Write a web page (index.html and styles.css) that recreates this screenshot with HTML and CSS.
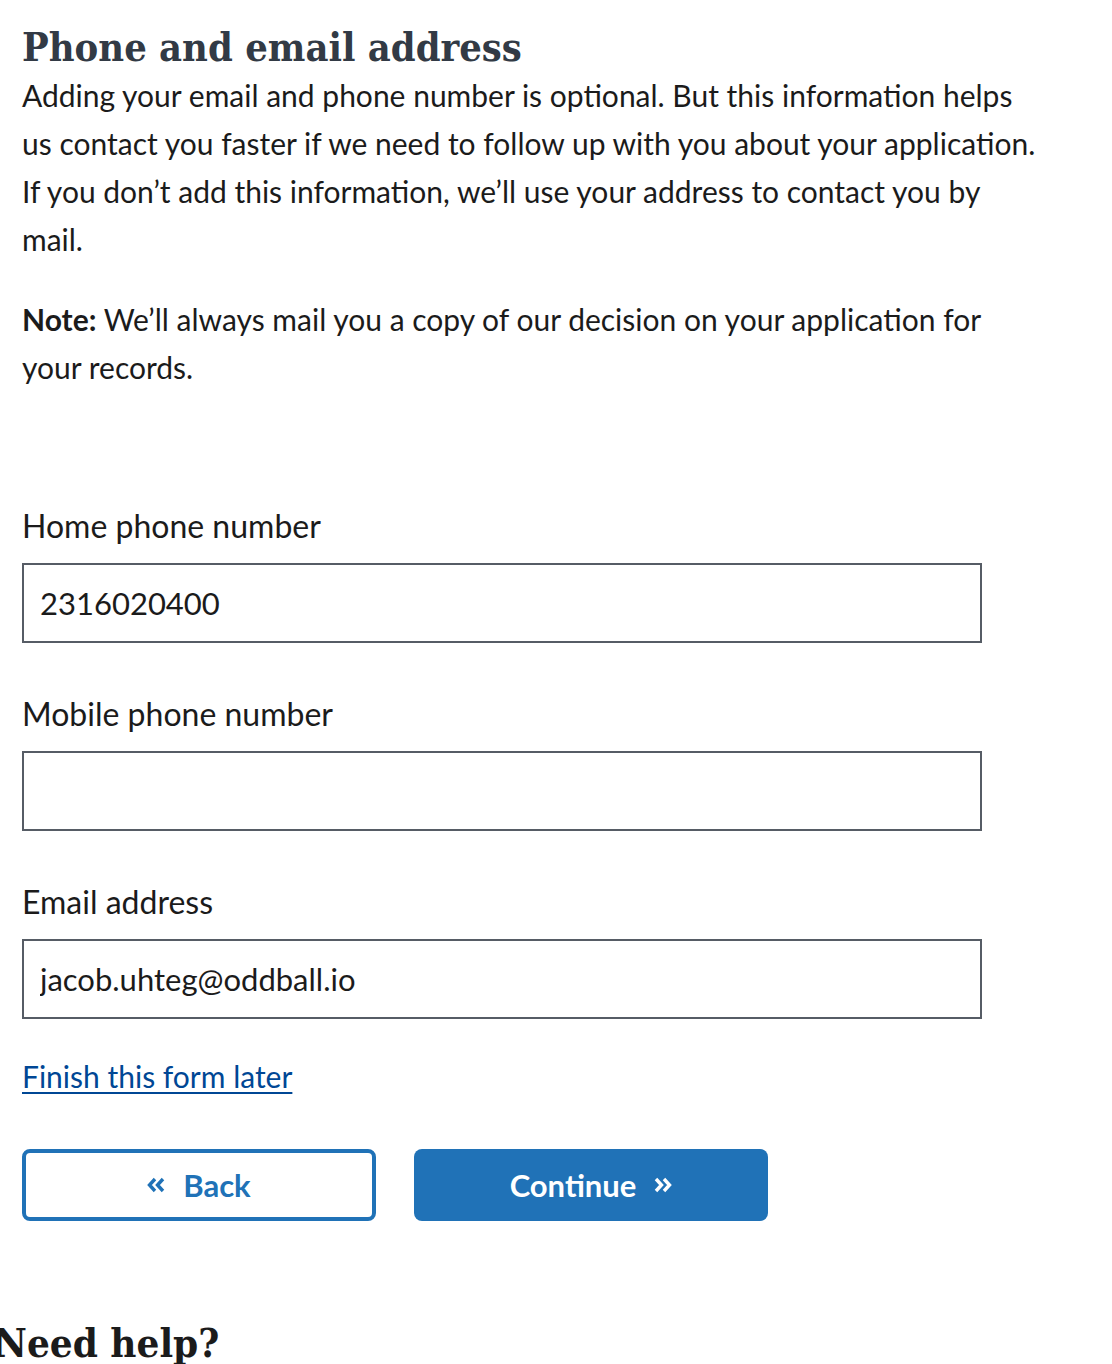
FILE: index.html
```html
<!DOCTYPE html>
<html lang="en">
<head>
<meta charset="utf-8">
<title>Phone and email address</title>
<link rel="stylesheet" href="styles.css">
</head>
<body>
<main class="page">
  <h1 class="title">Phone and email address</h1>
  <p class="intro">Adding your email and phone number is optional. But this information helps us contact you faster if we need to follow up with you about your application. If you don’t add this information, we’ll use your address to contact you by mail.</p>
  <p class="intro"><strong>Note:</strong> We’ll always mail you a copy of our decision on your application for your records.</p>

  <form class="form">
    <div class="field">
      <label class="label" for="home">Home phone number</label>
      <input class="input" id="home" type="text" value="2316020400">
    </div>
    <div class="field">
      <label class="label" for="mobile">Mobile phone number</label>
      <input class="input" id="mobile" type="text" value="">
    </div>
    <div class="field">
      <label class="label" for="email">Email address</label>
      <input class="input" id="email" type="text" value="jacob.uhteg@oddball.io">
    </div>
    <a class="later" href="#">Finish this form later</a>
    <div class="actions">
      <button type="button" class="btn btn-back">
        <svg class="chev" width="18" height="16" viewBox="0 0 18 16" aria-hidden="true"><polyline points="8,2 2.5,8 8,14" fill="none" stroke="currentColor" stroke-width="3.4" stroke-linejoin="miter"/><polyline points="16,2 10.5,8 16,14" fill="none" stroke="currentColor" stroke-width="3.4" stroke-linejoin="miter"/></svg>
        <span>Back</span>
      </button>
      <button type="button" class="btn btn-continue">
        <span>Continue</span>
        <svg class="chev" width="18" height="16" viewBox="0 0 18 16" aria-hidden="true"><polyline points="2,2 7.5,8 2,14" fill="none" stroke="currentColor" stroke-width="3.4" stroke-linejoin="miter"/><polyline points="10,2 15.5,8 10,14" fill="none" stroke="currentColor" stroke-width="3.4" stroke-linejoin="miter"/></svg>
      </button>
    </div>
  </form>
</main>
<h2 class="help">Need help?</h2>
</body>
</html>
```
FILE: styles.css
```css
html, body {
  margin: 0;
  padding: 0;
  background: #ffffff;
}
body {
  font-family: "Lato", "Liberation Sans", sans-serif;
  color: #1b1b1b;
  overflow: hidden;
  height: 1364px;
}
.page {
  padding: 0 0 0 22px;
  width: 1024px;
}
.title {
  font-family: "DejaVu Serif Condensed", "DejaVu Serif", serif;
  font-stretch: condensed;
  font-weight: bold;
  font-size: 39.5px;
  line-height: 48px;
  color: #323a45;
  margin: 23px 0 0 0;
}
.intro {
  font-size: 30px;
  line-height: 48px;
  margin: 0 0 32px 0;
}
.intro strong {
  font-weight: 700;
}
.form {
  display: flex;
  flex-direction: column;
  align-items: flex-start;
  margin-top: 111px;
}
.field {
  display: flex;
  flex-direction: column;
  margin-bottom: 47px;
}
.label {
  font-size: 32px;
  line-height: 48px;
  margin-bottom: 13px;
}
.input {
  box-sizing: border-box;
  width: 960px;
  height: 80px;
  border: 2px solid #565c65;
  border-radius: 0;
  padding: 0 16px;
  font-family: "Lato", "Liberation Sans", sans-serif;
  font-size: 31px;
  color: #1b1b1b;
  background: #fff;
  outline: none;
}
.later {
  font-size: 30px;
  line-height: 48px;
  color: #004795;
  text-decoration: underline;
  text-underline-offset: 4px;
  text-decoration-thickness: 2px;
  margin-top: -14px;
}
.actions {
  display: flex;
  gap: 38px;
  margin-top: 49px;
}
.btn {
  box-sizing: border-box;
  width: 354px;
  height: 72px;
  border-radius: 8px;
  font-family: "Lato", "Liberation Sans", sans-serif;
  font-weight: 700;
  font-size: 31px;
  cursor: pointer;
  display: flex;
  align-items: center;
  justify-content: center;
  gap: 18px;
  padding: 0;
}
.btn-back {
  background: #fff;
  border: 4px solid #2072b7;
  color: #2072b7;
}
.btn-continue {
  background: #2072b7;
  border: none;
  color: #fff;
}
.chev {
  display: block;
  flex: none;
}
.help {
  font-family: "DejaVu Serif Condensed", "DejaVu Serif", serif;
  font-stretch: condensed;
  font-weight: bold;
  font-size: 40px;
  line-height: 48px;
  color: #1b1b1b;
  margin: 0 0 0 -6px;
  padding-top: 98px;
}
```
